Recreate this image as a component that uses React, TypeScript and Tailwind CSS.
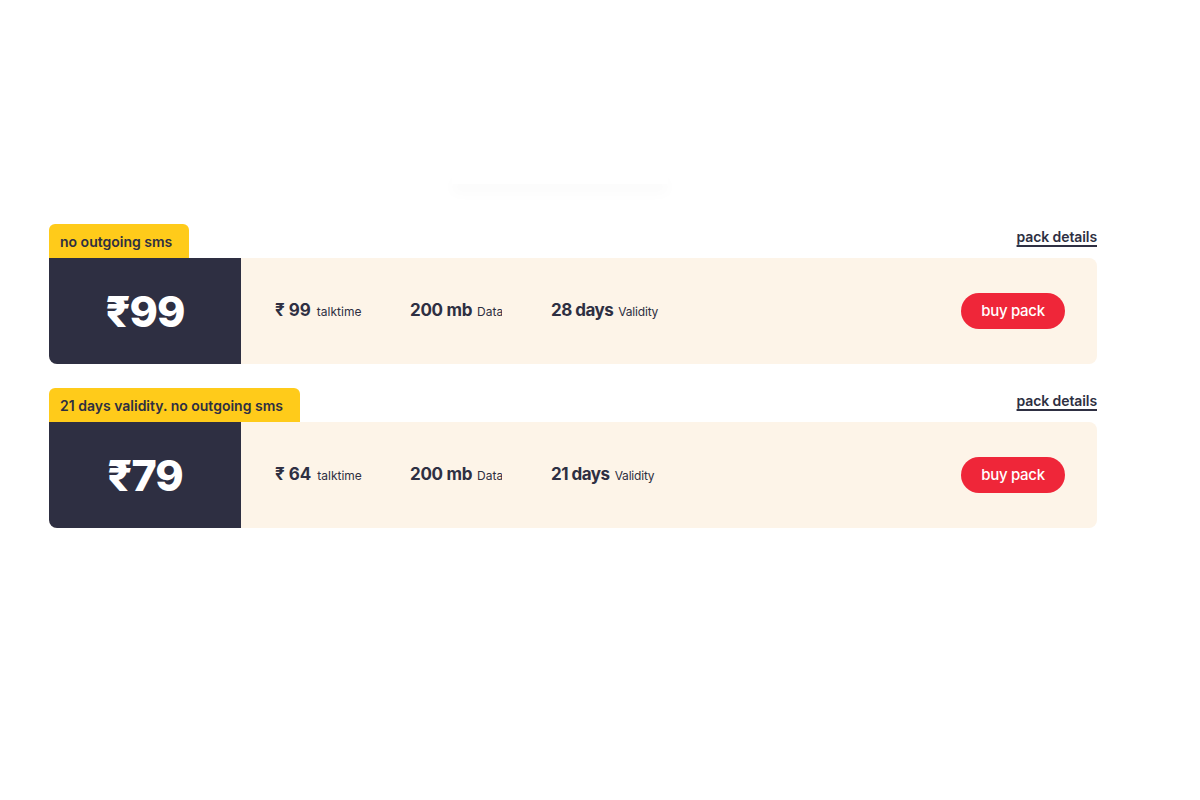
import React from "react";

type Pack = {
  tag: string;
  price: string;
  talktime: string;
  data: string;
  validity: string;
};

const packs: Pack[] = [
  { tag: "no outgoing sms", price: "99", talktime: "99", data: "200 mb", validity: "28 days" },
  { tag: "21 days validity. no outgoing sms", price: "79", talktime: "64", data: "200 mb", validity: "21 days" },
];

function PackCard({ p }: { p: Pack }) {
  return (
    <div className="w-[1048px]">
      <div className="flex justify-between items-start">
        <div className="h-[34px] pl-[11px] pr-[17px] bg-[#ffcb1a] rounded-t-[6px] flex items-center text-[14px] font-semibold text-[#2e2f42]">
          {p.tag}
        </div>
        <a className="mt-[3px] text-[14px] leading-[20px] font-semibold text-[#2e2f42] underline decoration-2 underline-offset-[3px] tracking-[-0.1px]">
          pack details
        </a>
      </div>
      <div className="flex h-[106px] rounded-b-[8px] rounded-tr-[8px] overflow-hidden bg-[#fdf4e8]">
        <div className="w-[192px] bg-[#2e2f42] flex items-center justify-center text-white text-[43px] font-extrabold tracking-[-1px]">
          ₹{p.price}
        </div>
        <div className="flex items-center pl-[34px] text-[#2e2f42]">
          <div className="w-[135px] whitespace-nowrap flex items-baseline">
            <span className="text-[17px] font-bold">₹ {p.talktime}</span>
            <span className="ml-[6px] text-[12px]">talktime</span>
          </div>
          <div className="w-[141px]">
            <div className="w-[92px] overflow-hidden whitespace-nowrap flex items-baseline">
              <span className="text-[17px] font-bold tracking-[-0.3px]">{p.data}</span>
              <span className="ml-[5px] text-[12px]">Data</span>
            </div>
          </div>
          <div className="whitespace-nowrap flex items-baseline">
            <span className="text-[17px] font-bold tracking-[-0.5px]">{p.validity}</span>
            <span className="ml-[5px] text-[12px] tracking-[-0.2px]">Validity</span>
          </div>
        </div>
        <div className="ml-auto mr-[32px] flex items-center">
          <button className="h-[36px] w-[104px] rounded-full bg-[#ef2639] text-white text-[15px] font-medium tracking-[-0.3px]">
            buy pack
          </button>
        </div>
      </div>
    </div>
  );
}

export default function App() {
  return (
    <div
      className="min-h-screen bg-white pt-[172px] pl-[49px]"
      style={{ fontFamily: "Inter, 'Noto Sans', sans-serif" }}
    >
      <div className="ml-[403px] w-[216px] h-[12px] bg-white shadow-[0_9px_14px_rgba(0,0,0,0.025)]" />
      <div className="mt-[40px] flex flex-col gap-[24px]">
        {packs.map((p, i) => (
          <PackCard key={i} p={p} />
        ))}
      </div>
    </div>
  );
}
